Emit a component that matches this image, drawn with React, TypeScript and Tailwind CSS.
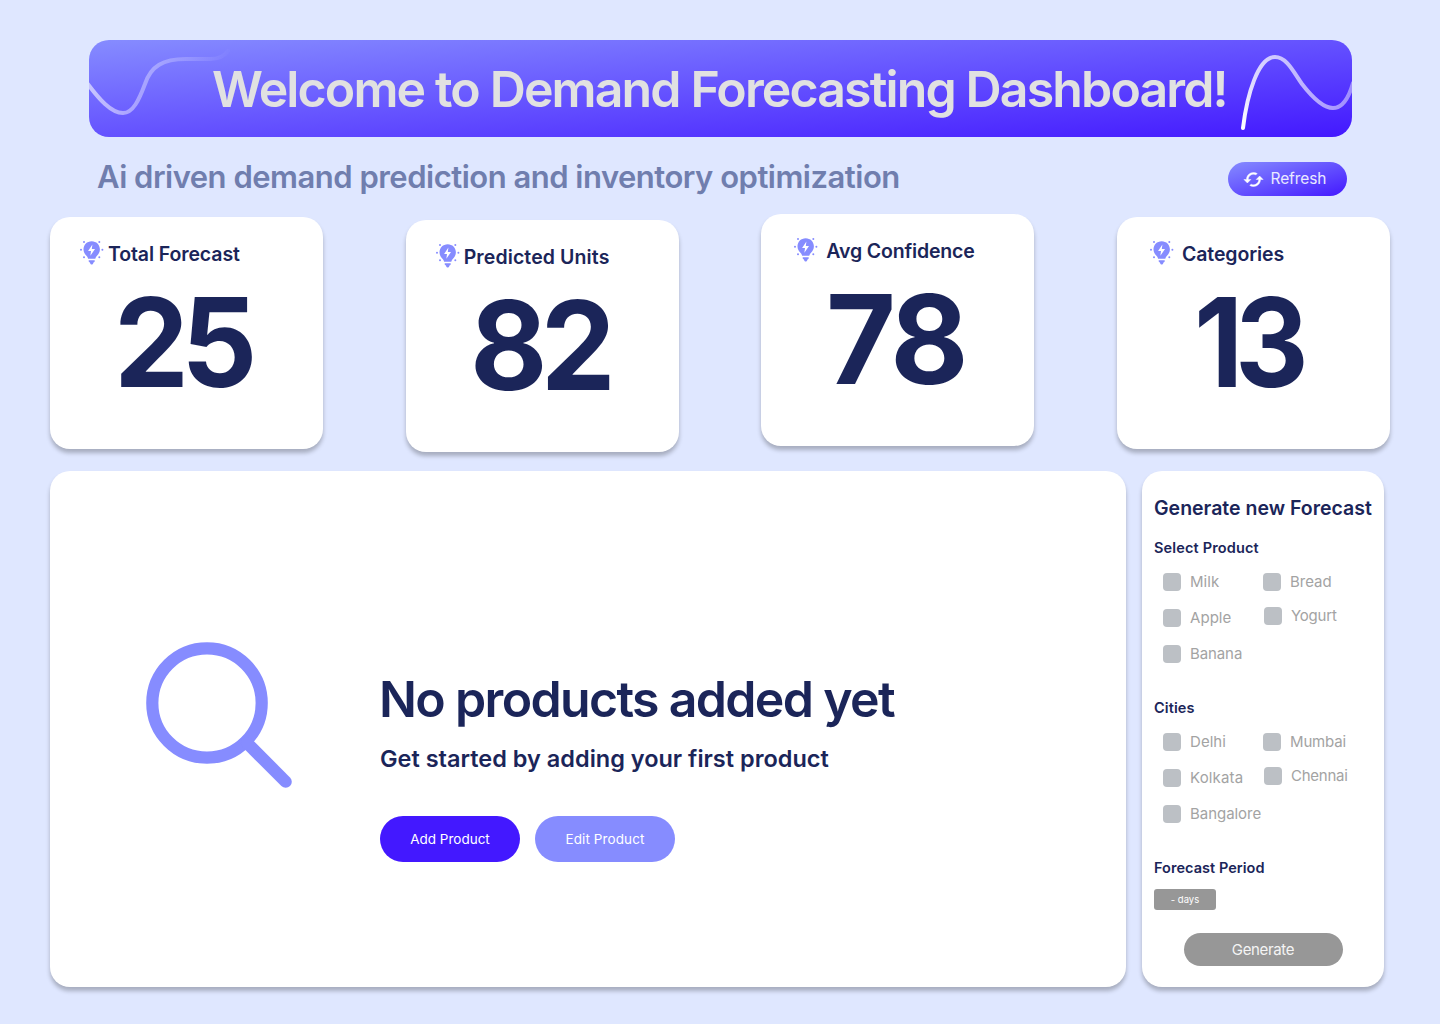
import clsx from 'clsx';

const SHADOW = 'shadow-[0_4px_4px_rgba(0,0,0,0.25)]';

function BulbIcon() {
  return (
    <svg viewBox="0 0 24 26" className="h-[26px] w-6 shrink-0" fill="#868CFF">
      <path d="M11.700 1.200c-4.700 0-8.200 3.600-8.200 8 0 2.700 1.200 4.600 2.700 6.300 1 1.100 1.700 2.100 1.900 3.300h7.200c.2-1.200.9-2.200 1.900-3.300 1.500-1.700 2.700-3.600 2.700-6.300 0-4.400-3.500-8-8.200-8Z" />
      <path d="M8.700 20.300h6v.9c0 .6-.4 1-1 1.100l-.7 1.500c-.2.4-.5.6-.9.6h-.8c-.4 0-.7-.2-.9-.6l-.7-1.500c-.6-.1-1-.5-1-1.100v-.9Z" />
      <path d="M12.400 4.500 8.100 11H11l-.6 4.700L15 9h-3.200l.6-4.500Z" fill="#fff" />
      <circle cx="1" cy="9.800" r="1" />
      <circle cx="22.400" cy="9.800" r="1" />
      <circle cx="4" cy="2" r="1" />
      <circle cx="19.300" cy="2" r="1" />
      <circle cx="4" cy="17.300" r="1" />
      <circle cx="19.300" cy="17.300" r="1" />
    </svg>
  );
}

function RefreshIcon() {
  return (
    <svg viewBox="0 0 24 24" className="size-[21px] shrink-0" fill="#fff" stroke="#fff" strokeWidth="0.5" strokeLinejoin="round">
      <path d="M19 8l-4 4h3c0 3.310-2.690 6-6 6-1.010 0-1.970-.25-2.800-.7l-1.460 1.460C8.970 19.540 10.430 20 12 20c4.420 0 8-3.580 8-8h3l-4-4zM6 12c0-3.310 2.690-6 6-6 1.010 0 1.970.25 2.800.7l1.460-1.460C15.030 4.460 13.570 4 12 4c-4.420 0-8 3.580-8 8H1l4 4 4-4H6z" />
    </svg>
  );
}

const stats = [
  { title: 'Total Forecast', value: '25', card: 'mt-[3px]', head: 'pl-[30px] gap-1', titleCls: 'tracking-[-0.11px]', valueCls: 'ml-16 scale-x-[0.96] tracking-[-8px]' },
  { title: 'Predicted Units', value: '82', card: 'mt-1.5', head: 'pl-[30px] gap-1', titleCls: 'tracking-[0.11px]', valueCls: 'ml-[64.5px] scale-x-[0.96] tracking-[-7px]' },
  { title: 'Avg Confidence', value: '78', card: 'mt-0', head: 'pl-[33px] gap-2', titleCls: 'tracking-[-0.155px]', valueCls: 'ml-[64.5px] scale-x-[0.97] tracking-[-4px]' },
  { title: 'Categories', value: '13', card: 'mt-[3px]', head: 'pl-[33px] gap-2', titleCls: 'tracking-[-0.1px]', valueCls: 'ml-[77.5px] scale-x-[0.92] tracking-[-9px]' },
];

type Item = [label: string, tracking: string];

function Option({ item, className }: { item: Item; className?: string }) {
  return (
    <label className={clsx('flex h-[18px] items-center gap-[9px]', className)}>
      <span className="size-[18px] shrink-0 rounded bg-[#BCC0C5]" />
      <span className={clsx('text-[15px] leading-[18px] text-[#A3A3A3]', item[1])}>{item[0]}</span>
    </label>
  );
}

function OptionGroup({ title, titleCls, left, right }: { title: string; titleCls: string; left: Item[]; right: Item[] }) {
  return (
    <section className="h-40">
      <h3 className={clsx('text-[14.5px] leading-5 font-semibold', titleCls)}>{title}</h3>
      <div className="mt-[15px] flex pl-[9px]">
        <div className="flex w-[100px] flex-col gap-[18px] whitespace-nowrap">
          {left.map((i) => <Option key={i[0]} item={i} />)}
        </div>
        <div className="flex flex-col gap-4 whitespace-nowrap">
          {right.map((i, n) => <Option key={i[0]} item={i} className={n === 1 ? 'ml-px' : ''} />)}
        </div>
      </div>
    </section>
  );
}

export default function App() {
  return (
    <div className="h-[1024px] w-[1440px] overflow-hidden bg-[#DFE7FF] pt-10 font-['Inter',sans-serif] text-[#1B2559]">
      <header className="relative ml-[89px] flex h-[97px] w-[1263px] items-center overflow-hidden rounded-[20px] bg-linear-to-br/srgb from-[#868CFF] to-[#4318FF] pl-[123px]">
        <svg viewBox="0 0 1263 97" className="absolute inset-0 h-[97px] w-[1263px]" fill="none" strokeWidth="4" strokeLinecap="round">
          <defs>
            <linearGradient id="fadeLeft" gradientUnits="userSpaceOnUse" x1="0" y1="0" x2="144" y2="0">
              <stop stopColor="#fff" stopOpacity="0.6" />
              <stop offset="1" stopColor="#fff" stopOpacity="0" />
            </linearGradient>
            <linearGradient id="fadeRight" gradientUnits="userSpaceOnUse" x1="1154" y1="90" x2="1263" y2="60">
              <stop stopColor="#fff" />
              <stop offset="0.2" stopColor="#fff" stopOpacity="0.8" />
              <stop offset="1" stopColor="#fff" stopOpacity="0.45" />
            </linearGradient>
          </defs>
          <path stroke="url(#fadeLeft)" d="M-2 43C10 59 22 73 34 73C44 73 50 60 56 44C62 26 74 19 97 19H121C129 19 135 17 139 11" />
          <path stroke="url(#fadeRight)" d="M1154 88C1158 55 1169 17 1186 17C1198 17 1205 33 1213 44C1223 57 1234 68 1244 68C1254 68 1260 57 1264 43" />
        </svg>
        <h1 className="relative text-[50px] leading-[60px] font-[620] tracking-[-1.86px] whitespace-nowrap text-[#E1E1E1]">
          Welcome to Demand Forecasting Dashboard!
        </h1>
      </header>

      <div className="mt-[25px] ml-[97px] flex h-[34px] w-[1250px] items-start justify-between">
        <p className="text-[31px] leading-[30px] font-[620] tracking-[-0.5px] whitespace-nowrap text-[#707EAE]">
          Ai driven demand prediction and inventory optimization
        </p>
        <button className="flex h-[34px] w-[119px] items-center gap-[7px] rounded-full bg-linear-to-br/srgb from-[#868CFF] to-[#4318FF] pl-[14.5px] text-[15.5px] tracking-[-0.1px] text-[#E9E9FF]">
          <RefreshIcon />
          Refresh
        </button>
      </div>

      <div className="mt-[18px] ml-[50px] flex h-[238px] w-[1340px] items-start justify-between">
        {stats.map((s) => (
          <div key={s.title} className={clsx('h-[232px] w-[273px] rounded-[20px] bg-white', SHADOW, s.card)}>
            <div className={clsx('flex h-[50px] items-start pt-6', s.head)}>
              <div className="mt-[-1px]"><BulbIcon /></div>
              <h2 className={clsx('text-[19.5px] leading-[26px] font-semibold whitespace-nowrap', s.titleCls)}>{s.title}</h2>
            </div>
            <div className={clsx('w-fit origin-left text-[124px] leading-[150px] font-[660]', s.valueCls)}>{s.value}</div>
          </div>
        ))}
      </div>

      <div className="mt-[19px] ml-[50px] flex gap-4">
        <main className={clsx('flex h-[516px] w-[1076px] rounded-[20px] bg-white pl-24', SHADOW)}>
          <svg viewBox="0 0 146 146" className="mt-[171px] size-[146px] shrink-0" fill="none" stroke="#868CFF" strokeWidth="12.200">
            <circle cx="61" cy="61" r="54.700" />
            <path d="M101 101 139.700 139.700" strokeLinecap="round" />
          </svg>
          <div className="ml-[88px] pt-[198px]">
            <h2 className="ml-[-1px] text-[50px] leading-[60px] font-[620] tracking-[-1.66px] whitespace-nowrap">No products added yet</h2>
            <p className="mt-[15px] text-[23.5px] leading-[30px] font-semibold whitespace-nowrap">Get started by adding your first product</p>
            <div className="mt-[42px] flex gap-[15px] text-[13.5px] text-white">
              <button className="h-[46px] w-[140px] rounded-[23px] bg-[#4318FF]">Add Product</button>
              <button className="h-[46px] w-[140px] rounded-[23px] bg-[#868CFF] tracking-[0.1px]">Edit Product</button>
            </div>
          </div>
        </main>

        <aside className={clsx('h-[516px] w-[242px] rounded-[20px] bg-white pt-6 pl-3', SHADOW)}>
          <h2 className="mb-[17px] text-[19.5px] leading-[26px] font-semibold whitespace-nowrap">Generate new Forecast</h2>
          <OptionGroup
            title="Select Product"
            titleCls="tracking-[0.15px]"
            left={[['Milk', 'tracking-[0.062px]'], ['Apple', 'tracking-[0.05px]'], ['Banana', 'tracking-[-0.1px]']]}
            right={[['Bread', 'tracking-normal'], ['Yogurt', 'tracking-[-0.22px]']]}
          />
          <OptionGroup
            title="Cities"
            titleCls="tracking-[0.107px]"
            left={[['Delhi', 'tracking-[0.05px]'], ['Kolkata', 'tracking-[0.15px]'], ['Bangalore', 'tracking-[-0.04px]']]}
            right={[['Mumbai', 'tracking-[-0.15px]'], ['Chennai', 'tracking-[-0.24px]']]}
          />
          <h3 className="text-[14.5px] leading-5 font-semibold tracking-[0.043px]">Forecast Period</h3>
          <div className="mt-[11px] flex h-[21px] w-[62px] items-center justify-center rounded-[3px] bg-[#979797] pt-px text-[9.5px] text-white">- days</div>
          <button className="mt-[23px] ml-[30px] block h-[33px] w-[159px] rounded-full bg-[#979797] pr-px text-[15px] leading-[33px] tracking-[-0.339px] text-[#F4F4F4]">Generate</button>
        </aside>
      </div>
    </div>
  );
}
